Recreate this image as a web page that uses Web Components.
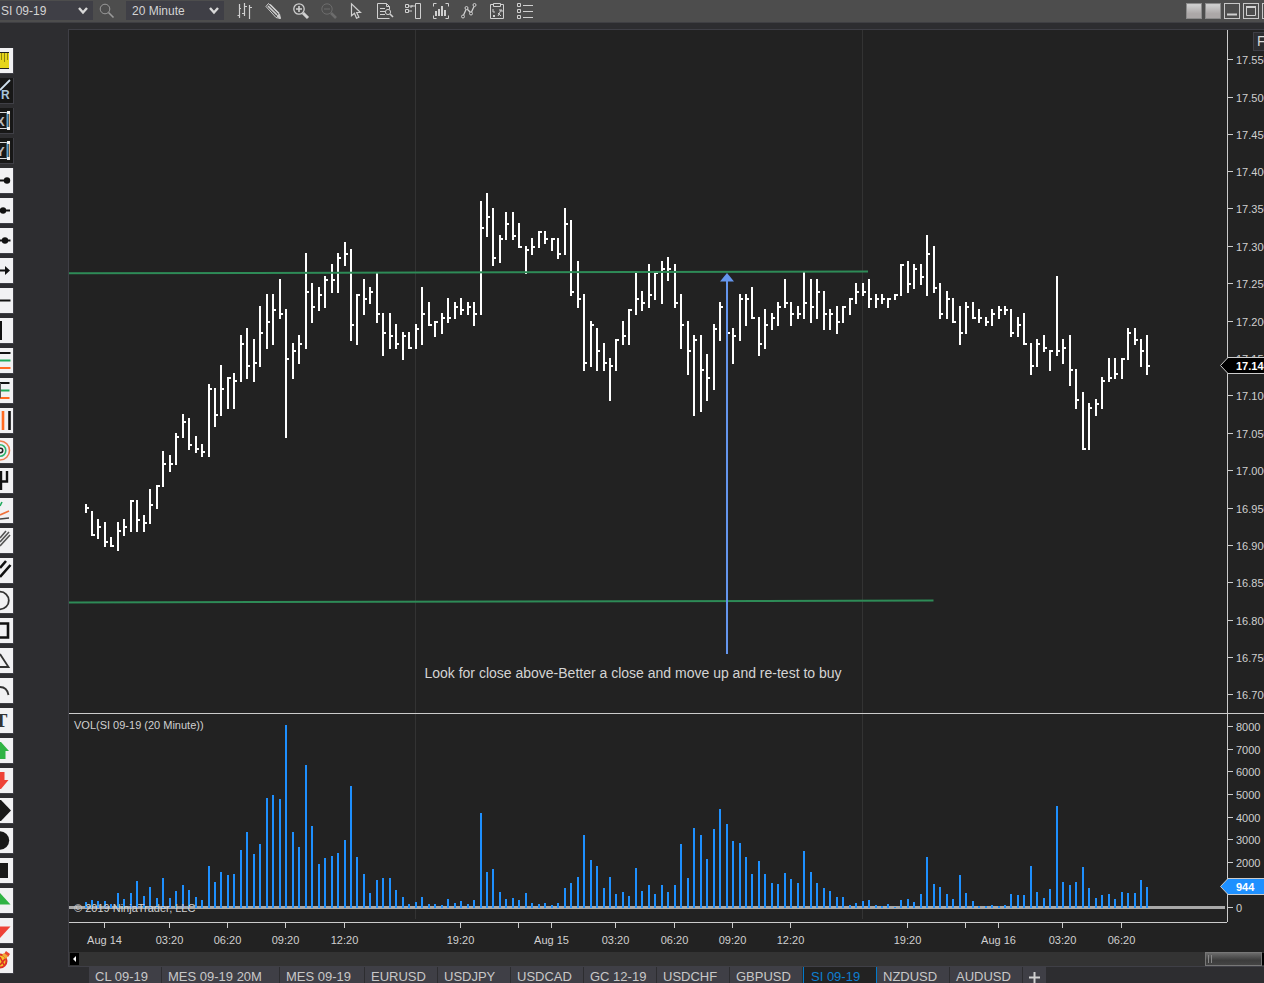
<!DOCTYPE html>
<html lang="en">
<head>
<meta charset="utf-8">
<title>SI 09-19 chart</title>
<style>
html, body { margin: 0; height: 100%; }
body { background: #2d2d30; color: #d0d0d0; font-family: "Liberation Sans", Arial, sans-serif; overflow: hidden; }
</style>
</head>
<body>
<chart-window></chart-window>
<script>
function define(name, css, html, setup) {
  const tpl = document.createElement('template');
  tpl.innerHTML = `<style>*{box-sizing:border-box}${css}</style>${html}`;
  customElements.define(name, class extends HTMLElement {
    constructor() {
      super();
      this.attachShadow({ mode: 'open' }).append(tpl.content.cloneNode(true));
    }
    connectedCallback() { if (setup) setup(this, this.shadowRoot); }
  });
}

/* ---------- toolbar ---------- */
define('drop-down',
  `:host{display:grid;width:98px;height:19px;font-size:12px}
   label{display:contents}
   select,svg{grid-area:1/1}
   select{appearance:none;border:0;border-radius:0;margin:0;padding:0 0 0 6px;background:#3f3f46;color:#d4d4d4;font:inherit;width:100%;height:100%}
   svg{justify-self:end;align-self:center;margin-right:5px;pointer-events:none}`,
  `<select></select><svg width="10" height="8" fill="none" stroke="#d8d8d8" stroke-width="2.4"><path d="M1 1l4 4.5 4-4.5"/></svg>`,
  (el, root) => {
    const s = root.querySelector('select');
    s.setAttribute('aria-label', el.getAttribute('label'));
    s.innerHTML = `<option>${el.getAttribute('value')}</option>`;
  });

const TOOL_ICONS = {
  'Chart style': '<path d="M2.500 1v14M.5 12.500h2M7.500 0v13M5 10.500h2M8 3.500h2M12.500 2v14M13 4.500h2M3 5.500h1" stroke-width="1.200"/>',
  'Drawing tools': '<path d="M1 3.500l2.500-3 11 10.500 1 4.500-4.500-1z"/><path d="M3 3l9 9M5 1.500l9 9" stroke-width="1.600"/><path d="M12 13l3 2.500-1-4z" fill="#d0d0d0"/>',
  'Zoom in': '<circle cx="6" cy="6" r="5.200" stroke-width="1.300"/><path d="M6 3v6M3 6h6" stroke-width="1.600"/><path d="M10 10l5 5" stroke-width="3"/>',
  'Zoom out': '<g stroke="#6c6c6c"><circle cx="6" cy="6" r="5.200"/><path d="M3 6h6"/><path d="M10 10l5 5" stroke-width="2.600"/></g>',
  'Pointer': '<path d="M2.500.8v12l3-2.600 2 5 2.400-1-2.200-4.700h3.800z" stroke-width="1.200"/>',
  'Data box': '<path d="M9.500.5H.5v15h12M9.500.5l3 3v3M9.500.5v3h3M3 5.500h5M3 8.500h5M3 11.500h5"/><circle cx="11" cy="9" r="2.600"/><path d="M13 11l3 3" stroke-width="1.600"/>',
  'Chart trader': '<path d="M.5 1.500h3v3h-3zM.5 6.500h3v3h-3zM4 3h4M4 8h3M10.500.5h5v15h-5zM10 3H6v2"/>',
  'Strategy': '<path d="M3.500.5h-3v3M12.500.5h3v3M.5 12.500v3h3M15.500 12.500v3h-3"/><path d="M3 8v5M6 6v7M9 3v10M12 7v6" stroke-width="2"/>',
  'Indicators': '<circle cx="2" cy="13.500" r="1.500"/><circle cx="5.500" cy="5" r="1.500"/><circle cx="10" cy="10.500" r="1.500"/><circle cx="13.500" cy="2" r="1.500"/><path d="M2.600 12l2.400-5.500M6.300 6.300l3 3M10.500 9l2.500-5.500" stroke-width="1.300"/>',
  'Performance': '<path d="M4 1.500H1.500v14h13v-14H12M4.500.5h7v3h-7zM4 6v3h2M4 12l2 2M6 12l-2 2M9 13l3-6M10 7h3v2M9 10l3 3"/>',
  'Properties': '<path d="M.5.5h3v3h-3zM.5 6.500h3v3h-3zM.5 12.500h3v3h-3zM6 2.500h10M6 8.500h10M6 14.500h10"/>'
};
define('tool-bar',
  `:host{display:flex;flex:none;align-items:flex-start;height:23px;padding-top:1px;background:#4d4d4d;border-bottom:1px solid #3f3f43}
   drop-down.first{margin-left:-5px}
   button{flex:none;display:block;width:16px;height:16px;padding:0;border:0;background:none}
   nav{display:flex;gap:12px;margin:2px 0 0 13px}
   .find{margin:2px 11px 0 6px}
   .win{display:flex;gap:3px;margin:2px -14px 0 auto}
   .win button{border:1px solid #c8c8c8}
   .win .link{border-color:#8b8b8b;background:linear-gradient(#ccc 10%,#aba7a7 70%)}
   svg{display:block;fill:none;stroke:#d0d0d0}`,
  `<drop-down class="first" label="Instrument" value="SI 09-19"></drop-down>
   <button class="find" aria-label="Find instrument"><svg width="16" height="16" style="stroke:#9a9a9a"><circle cx="6" cy="6" r="4.800"/><path d="M9.500 9.500l5 5" stroke-width="1.600"/></svg></button>
   <drop-down label="Interval" value="20 Minute"></drop-down>
   <nav>${Object.entries(TOOL_ICONS).map(([n, p]) => `<button aria-label="${n}"><svg width="16" height="16" overflow="visible">${p}</svg></button>`).join('')}</nav>
   <div class="win"><button class="link" aria-label="Instrument link"></button><button class="link" aria-label="Interval link"></button>
   <button aria-label="Minimize"><svg width="14" height="14"><path d="M2 10.500h10" stroke-width="2"/></svg></button>
   <button aria-label="Maximize"><svg width="14" height="14"><path d="M2.500 3v8.500h9V3"/><path d="M2 3h10" stroke-width="2"/></svg></button>
   <button aria-label="Close"></button></div>`);

/* ---------- drawing palette, cut by the left edge of the window ---------- */
const K = 'stroke="#111" fill="none"';
const PALETTE = [
  ['Ruler', '<path fill="#e6d51c" d="M0 5h9v15H0z"/><path stroke="#8f8410" d="M1.500 5v7M4.500 5v9M7.500 5v7"/><path stroke="#222" d="M0 4.500h9M0 20.500h9"/>'],
  ['Risk reward', '<path stroke="#cfe0ee" stroke-width="1.800" d="M0 12L10 2"/><text x="1" y="21" font-size="12" font-weight="bold" fill="#a9c4da">R</text>', 1],
  ['Range X', '<text x="-4" y="18" font-size="13" font-weight="bold" fill="#bbb">X</text><path stroke="#ddd" d="M0 4.500h9M0 20.500h9"/><path stroke="#5aa0cf" stroke-width="2" d="M7.500 4v17"/><path stroke="#e0b07a" d="M9.500 4v17"/><path fill="#eee" d="M7 3h3v3H7zM7 19h3v3H7z"/>', 1],
  ['Range Y', '<text x="-4" y="18" font-size="13" font-weight="bold" fill="#bbb">Y</text><path stroke="#ddd" d="M0 4.500h9M0 20.500h9"/><path stroke="#5aa0cf" stroke-width="2" d="M7.500 4v17"/><path stroke="#e0b07a" d="M9.500 4v17"/><path fill="#eee" d="M7 3h3v3H7zM7 19h3v3H7z"/>', 1],
  ['Line', `<path ${K} stroke-width="2" d="M0 12.500h7"/><circle cx="7" cy="12.500" r="3.200" fill="#111"/>`],
  ['Ray', `<path ${K} stroke-width="2" d="M0 12.500h10"/><circle cx="3" cy="12.500" r="3.200" fill="#111"/>`],
  ['Extended line', `<path ${K} stroke-width="2" d="M0 12.500h10.500"/><circle cx="5" cy="12.500" r="3.200" fill="#111"/>`],
  ['Arrow line', `<path ${K} stroke-width="2" d="M0 12.500h7"/><path fill="#111" d="M5 8l5 4.500L5 17z"/>`],
  ['Horizontal line', `<path ${K} stroke-width="2" d="M0 12.500h10.500"/>`],
  ['Vertical line', '<path fill="#111" d="M0 3h2v19H0z"/>'],
  ['Fibonacci retracement', '<g stroke-width="2"><path stroke="#111" d="M0 5h10.500"/><path stroke="#1faa5c" d="M0 12.500h10.500"/><path stroke="#ff6a21" d="M0 20h10.500"/></g>'],
  ['Fibonacci extension', '<g stroke-width="2"><path stroke="#111" d="M0 5h9.500"/><path stroke="#1faa5c" d="M0 12.500h9.500"/><path stroke="#ff6a21" d="M0 20h9.500"/></g><path stroke="#555" d="M.5 5v15"/>'],
  ['Fibonacci time', '<path stroke="#ff6a21" stroke-width="2.600" d="M3 3v19"/><path stroke="#111" stroke-width="2.600" d="M9.500 3v19"/>'],
  ['Fibonacci circle', '<g fill="none" stroke-width="1.600"><circle cx="0" cy="12.500" r="9.500" stroke="#ee7f50"/><circle cx="0" cy="12.500" r="5.800" stroke="#2fb36d"/><circle cx=".5" cy="12.500" r="2.200" stroke="#222"/></g>'],
  ['Pitchfork', `<path ${K} stroke-width="2.400" d="M1 3v19M0 13.500h7V3"/>`],
  ['Gann fan', '<g stroke-width="1.600"><path stroke="#1faa5c" d="M0 8l2-4"/><path stroke="#f0703a" d="M0 17l9-4"/><path stroke="#444" d="M0 21l9-1"/></g>'],
  ['Regression channel', '<path stroke="#555" stroke-width="1.600" fill="none" d="M0 10l6-7M0 14l9-10M0 18l10-11"/>'],
  ['Trend channel', `<path ${K} stroke-width="2.600" d="M0 10l6-7M0 19L10.500 7"/>`],
  ['Ellipse', '<circle cx="0" cy="12.500" r="8.800" fill="none" stroke="#333" stroke-width="1.800"/>'],
  ['Rectangle', `<path ${K} stroke-width="2.600" d="M0 5.500h8v14H0"/>`],
  ['Triangle', '<path stroke="#333" stroke-width="1.800" fill="none" d="M0 6l8.500 13H0"/>'],
  ['Arc', '<path stroke="#333" stroke-width="1.800" fill="none" d="M0 9q7 0 8.500 8"/>'],
  ['Text', '<text x="1" y="19" font-size="19" font-weight="bold" font-family="Liberation Serif" text-anchor="middle" fill="#333">T</text>'],
  ['Arrow up', '<path fill="#2fb344" d="M1 4l8 9H5.500v8H0V4z"/>'],
  ['Arrow down', '<path fill="#ee4237" d="M0 4h4.500v8H8.500L1 21H0z"/>'],
  ['Diamond', '<path fill="#181818" d="M0 2h1l10 10.500L1 23H0z"/>'],
  ['Dot', '<circle cx="0" cy="12.500" r="9.200" fill="#181818"/>'],
  ['Square', '<path fill="#181818" d="M0 5h8v15H0z"/>'],
  ['Triangle up', '<path fill="#2fb344" d="M0 5l10.500 11.500H0z"/>'],
  ['Triangle down', '<path fill="#ee4237" d="M0 8.500h10.500L0 20z"/>'],
  ['Remove drawings', '<circle cx="0" cy="13" r="6.500" fill="#f3c62b" stroke="#dd2f25" stroke-width="2"/><path stroke="#dd2f25" stroke-width="1.600" d="M0 9l4 8M0 17l5-6"/><path fill="#e8452f" d="M4 6l2-3 4 3-2 3z"/><path fill="#f0a838" d="M2 7l2-2 4 3-2 3z"/>']
];
define('tool-palette',
  `:host{display:flex;flex-direction:column;gap:4px;flex:none;width:14px;margin-top:25px}
   button{flex:none;width:14px;height:26px;padding:0;border:solid #3f3f46;border-width:0 1px 1px 0;background:#f1f1f3}
   button.dark{background:#171717}
   svg{display:block;overflow:hidden}`,
  PALETTE.map(([n, p, d]) => `<button aria-label="${n}"${d ? ' class="dark"' : ''}><svg width="13" height="25">${p}</svg></button>`).join(''));

/* ---------- chart data ---------- */
/* high, low, close of each bar as depth below the top of the band, three units to the pixel */
const BARS = `1002,1029,1014 1023,1098,1095 1047,1107,1071 1056,1131,1116 1101,1131,1128 1056,1143,1083 1047,1098,1071 990,1086,993 990,1086,1050 1035,1086,1059
957,1062,1005 945,1017,948 843,951,882 855,906,882 789,885,801 732,804,756 744,840,825 798,849,837 822,861,846 642,861,657
654,771,735 585,738,657 621,717,624 609,717,633 495,636,522 474,627,588 507,636,579 408,591,489 372,537,456 372,525,420
327,447,432 417,804,567 519,627,543 495,582,522 249,537,366 339,459,411 351,423,375 318,414,330 282,369,330 249,369,264
216,288,252 237,513,465 372,525,375 327,435,387 351,402,366 309,459,432 429,558,489 429,537,498 462,537,522 486,570,498
486,537,534 462,537,477 351,525,432 396,468,465 453,501,456 429,492,444 384,459,444 396,447,411 384,435,420 396,435,411
396,468,432 93,435,174 69,201,141 114,288,264 195,279,207 126,210,162 126,210,198 159,234,231 228,312,240 204,255,231
183,234,186 183,222,207 204,243,207 204,267,252 114,255,162 150,378,366 273,414,387 372,603,579 453,591,465 474,603,543
519,603,579 564,693,588 507,603,510 453,525,498 417,525,420 309,435,387 363,423,399 282,414,375 306,390,309 273,402,297
261,333,297 282,414,399 372,537,465 453,615,543 495,738,510 495,726,600 552,693,624 462,660,477 396,513,411 420,540,489
474,582,498 372,513,387 372,468,387 351,447,444 441,558,522 417,537,465 429,480,444 396,468,411 327,414,399 396,468,432
408,447,432 306,447,399 327,459,411 327,447,366 363,480,432 417,480,432 408,492,456 408,459,411 384,435,387 339,402,366
339,378,366 327,414,387 372,414,387 372,402,387 384,414,387 372,390,375 282,378,285 273,369,342 282,357,297 282,345,321
195,378,252 228,369,354 339,447,432 363,447,387 384,459,456 408,525,489 396,492,411 396,447,444 417,459,444 441,468,456
417,468,432 408,447,420 408,435,420 417,501,489 441,501,465 429,525,522 519,615,588 507,591,522 495,546,534 540,603,543
318,558,543 507,582,534 495,648,600 597,717,690 666,840,837 699,840,714 687,738,702 621,717,633 564,636,624 564,627,612
564,627,567 474,570,489 474,525,510 507,591,543 495,615,588`.split(/\s+/).map(s => s.split(',').map(v => v / 3 + 140));
const VOLUME = [6,8,7,7,4,15,9,15,27,12,21,10,30,10,17,23,18,11,8,42,26,36,33,34,58,76,54,64,110,113,109,183,76,61,143,82,44,50,52,55,68,122,51,34,15,28,30,30,18,11,4,6,11,4,4,3,9,5,
  7,4,8,95,36,39,16,9,10,8,15,5,4,5,3,5,20,25,31,73,48,42,20,31,14,16,12,40,17,23,14,23,16,23,64,30,80,73,49,79,99,84,67,65,51,34,47,34,25,24,35,29,25,57,36,25,20,17,11,11,3,5,
  7,8,3,2,4,1,8,9,6,14,51,24,21,14,9,33,15,7,2,2,3,2,3,14,13,13,42,16,10,19,102,26,23,26,41,20,10,13,14,9,16,15,15,28,21];
const W = 1158, PRICE_H = 683, VOL_H = 208;
const barX = i => Math.floor(17 + 6.4755 * i);
const pct = (v, total) => (v / total * 100) + '%';

/* ---------- price pane ---------- */
const barPath = BARS.map(([h, l, c], i) => `M${barX(i) - 1} ${h}h2V${l}h-2zM${barX(i) + 1} ${c - 1}h2v2h-2z`).join('');
define('price-pane',
  `:host{display:block;min-width:0;min-height:0}svg{display:block}.t{font-size:14px;fill:#d4d4d4}`,
  `<svg width="100%" height="100%">
    <svg width="100%" height="100%" viewBox="0 0 ${W} ${PRICE_H}" preserveAspectRatio="none">
     <path d="M346.500 0v${PRICE_H}M793.500 0v${PRICE_H}" stroke="#333"/>
     <path d="${barPath}" fill="#fff" shape-rendering="crispEdges"/>
     <path d="M0 243.300L799 241.500M0 572.500L864.500 570.500" stroke="#2e8b57" stroke-width="2"/>
     <path d="M657 248h2v376h-2z" fill="#6495ed"/><path d="M658 243l7 8.500h-14z" fill="#6495ed"/>
    </svg>
    <text class="t" x="${pct(564, W)}" y="${pct(648, PRICE_H)}" text-anchor="middle">Look for close above-Better a close and move up and re-test to buy</text>
   </svg>`);

/* ---------- volume pane ---------- */
const volPath = VOLUME.map((v, i) => `M${barX(i) - 1} ${194 - v}h2v${v}h-2z`).join('');
define('volume-pane',
  `:host{display:block;min-width:0;min-height:0}svg{display:block}text{font-size:11px;fill:#d0d0d0}`,
  `<svg width="100%" height="100%">
    <svg width="100%" height="100%" viewBox="0 0 ${W} ${VOL_H}" preserveAspectRatio="none">
     <path d="M346.500 0v205M793.500 0v205" stroke="#333"/>
     <path d="M0 192h1156v3H0z" fill="#a9a9a9"/>
     <path d="${volPath}" fill="#1e90ff" shape-rendering="crispEdges"/>
    </svg>
    <text x="5" y="15">VOL(SI 09-19 (20 Minute))</text>
    <text x="5" y="${pct(198, VOL_H)}">© 2019 NinjaTrader, LLC</text>
   </svg>`);

/* ---------- value axis: labels "text@y", marker "text@y@fill@stroke" ---------- */
define('value-axis',
  `:host{display:block;min-width:0;min-height:0;border-left:1px solid #ccc}
   svg{display:block;overflow:visible}text{font-size:11px;fill:#d0d0d0}line{stroke:#ccc;shape-rendering:crispEdges}
   .m text{font-weight:bold;fill:#fff}`,
  `<svg width="100%" height="100%"></svg>`,
  (el, root) => {
    const H = +el.getAttribute('span');
    const rows = el.getAttribute('labels').split(' ').map(s => s.split('@'));
    const [mt, my, fill, stroke] = el.getAttribute('marker').split('@');
    root.querySelector('svg').innerHTML = rows.map(([t, y]) =>
      `<line x1="0" x2="5" y1="${pct(+y, H)}" y2="${pct(+y, H)}"/><text x="8" y="${pct(+y, H)}" dy="4">${t}</text>`).join('') +
      `<svg class="m" y="${pct(+my, H)}"><path d="M-7.500 0L0 -8H60V8H0z" fill="${fill}" stroke="${stroke}"/><text x="8" y="4">${mt}</text></svg>`;
  });

/* ---------- time axis ---------- */
const TIMES = [['Aug 14',35],['03:20',100],['06:20',158],['09:20',216],['12:20',275],['19:20',391],['',449],['Aug 15',482],['03:20',546],['06:20',605],['09:20',663],['12:20',721],['19:20',838],['',896],['Aug 16',929],['03:20',993],['06:20',1052]];
define('time-axis',
  `:host{display:block;height:30px;min-width:0;border-top:1px solid #ccc}svg{display:block}text{font-size:11px;fill:#d0d0d0;text-anchor:middle}line{stroke:#ccc;shape-rendering:crispEdges}`,
  `<svg width="100%" height="29">${TIMES.map(([t, x]) => {
    const p = pct(x + .5, W);
    return `<line x1="${p}" x2="${p}" y1="0" y2="5"/>` + (t ? `<text x="${p}" y="21">${t}</text>` : '');
  }).join('')}</svg>`);

/* ---------- scroll strip ---------- */
define('scroll-strip',
  `:host{display:flex;align-items:center;height:14px;background:#333}
   button{flex:none;padding:0;border:0}
   .l{width:9px;height:12px;margin-left:1px;background:#000}
   .thumb{width:57px;height:14px;margin-left:auto;border:1px solid #777;background:linear-gradient(#6b6b6b,#3c3c3c 60%,#444)}
   .r{width:2px;height:12px;background:#000}svg{display:block}`,
  `<button class="l" aria-label="Scroll left"><svg width="9" height="12"><path d="M6 3v6L3 6z" fill="#fff"/></svg></button>
   <button class="thumb" aria-label="Scroll position"><svg width="12" height="12"><path d="M2.500 2v8M5.500 2v8" stroke="#888"/></svg></button>
   <button class="r" aria-label="Scroll right"></button>`);

/* ---------- chart panel ---------- */
const priceLabels = [29,67,104,141,178,216,253,291,328,365,403,440,478,515,552,590,627,664].map((y, i) => `${(17.55 - i * .05).toFixed(3)}@${y + .5}`).join(' ');
const volLabels = [['8000',12],['7000',35],['6000',57],['5000',80],['4000',103],['3000',125],['2000',148],['0',193]].map(([t, y]) => `${t}@${y + .5}`).join(' ');
define('chart-panel',
  `:host{display:flex;flex-direction:column;flex:1;min-width:0;margin:6px 0 0 54px;border:solid #3f3f46;border-width:1px 0 1px 1px;background:#222;overflow:hidden}
   .grid{position:relative;flex:1;min-height:0;display:grid;grid-template-columns:minmax(0,1fr) 37px;grid-template-rows:minmax(0,683fr) 1px minmax(0,208fr) auto}
   hr{grid-column:1/3;margin:0;border:0;background:#ccc}
   value-axis{z-index:1}
   .fixed{position:absolute;z-index:2;right:-9px;top:2px;width:20px;height:19px;padding:0 0 0 3px;border:1px solid #3f3f46;background:#2d2d30;color:#d8d8d8;font:14px/17px "Liberation Sans",sans-serif;text-align:left}`,
  `<div class="grid">
    <price-pane></price-pane>
    <value-axis span="${PRICE_H}" labels="${priceLabels}" marker="17.140@335.5@#000@#ccc"></value-axis>
    <hr>
    <volume-pane></volume-pane>
    <value-axis span="${VOL_H}" labels="${volLabels}" marker="944@172.5@#1e90ff@#ccc"></value-axis>
    <time-axis></time-axis>
    <button class="fixed" aria-label="Fixed scale">F</button>
   </div>
   <scroll-strip></scroll-strip>`);

/* ---------- tabs ---------- */
define('chart-tabs',
  `:host{display:flex;flex:none;height:16px;margin-left:89px;overflow:hidden}
   button{flex:none;width:73px;height:20px;padding:0 0 0 6px;border:0;border-right:1px solid #2d2d30;background:#3f3f46;color:#c8c8c8;font:13px/20px "Liberation Sans",sans-serif;text-align:left;white-space:nowrap}
   button.mid{width:85px}
   button.long{width:118px}
   button.on{width:74px;padding:0 0 0 7px;border:solid #007acc;border-width:0 1px;background:#222;color:#0e7fd0}
   button.add{display:grid;place-items:center;width:23px;padding:0;border:0}`,
  [['CL 09-19'],['MES 09-19 20M','long'],['MES 09-19','mid'],['EURUSD'],['USDJPY'],['USDCAD'],['GC 12-19'],['USDCHF'],['GBPUSD'],['SI 09-19','on'],['NZDUSD'],['AUDUSD']]
    .map(([t, c]) => `<button class="${c || ''}">${t}</button>`).join('') +
  `<button class="add" aria-label="Add tab"><svg width="11" height="11"><path d="M5.500 0v11M0 5.500h11" stroke="#d0d0d0" stroke-width="2"/></svg></button>`);

define('chart-window',
  `:host{display:flex;flex-direction:column;height:100vh;overflow:hidden}
   main{flex:1;min-height:0;display:flex}
   tool-palette{height:0}`,
  `<tool-bar></tool-bar><main><tool-palette></tool-palette><chart-panel></chart-panel></main><chart-tabs></chart-tabs>`);
</script>
</body>
</html>
